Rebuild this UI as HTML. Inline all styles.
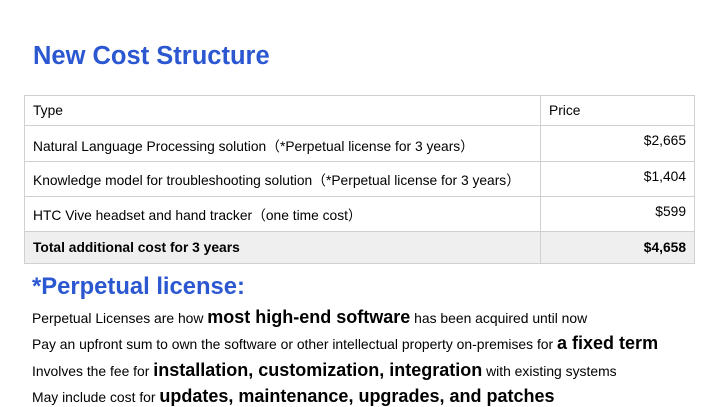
<!DOCTYPE html>
<html><head><meta charset="utf-8"><style>
body{margin:0;width:720px;height:405px;background:#fff;font-family:"Liberation Sans","Noto Sans CJK SC",sans-serif;position:relative;overflow:hidden;color:#000}
h1{position:absolute;left:33px;top:41px;margin:0;font-size:25.5px;color:#2b57d1;font-weight:bold;line-height:30px}
table{position:absolute;left:24px;top:95px;border-collapse:collapse;width:671px;font-size:13.8px}
td{border:1px solid #d0d0d0;padding:0 8px;vertical-align:middle}
td.p{text-align:right;vertical-align:top;padding-top:7px}
.tot td{background:#efefef;font-weight:bold}
.tot td.p{vertical-align:middle;padding-top:0}
h2{position:absolute;left:32px;top:273px;margin:0;font-size:23.8px;color:#2b57d1;font-weight:bold;line-height:28px}
.l{position:absolute;left:32px;font-size:13.9px;white-space:nowrap;line-height:20px}
.l b{font-size:18px}
</style></head><body>
<h1>New Cost Structure</h1>
<table>
<tr style="height:30px"><td style="width:499px">Type</td><td style="padding-left:8px">Price</td></tr>
<tr style="height:36px"><td style="padding-top:2px">Natural Language Processing solution（*Perpetual license for 3 years）</td><td class="p">$2,665</td></tr>
<tr style="height:35px"><td style="padding-top:0">Knowledge model for troubleshooting solution（*Perpetual license for 3 years）</td><td class="p">$1,404</td></tr>
<tr style="height:35px"><td>HTC Vive headset and hand tracker（one time cost）</td><td class="p">$599</td></tr>
<tr class="tot" style="height:32px"><td>Total additional cost for 3 years</td><td class="p">$4,658</td></tr>
</table>
<h2>*Perpetual license:</h2>
<div class="l" style="top:307px">Perpetual Licenses are how <b>most high-end software</b> has been acquired until now</div>
<div class="l" style="top:333px">Pay an upfront sum to own the software or other intellectual property on-premises for <b>a fixed term</b></div>
<div class="l" style="top:360px">Involves the fee for <b>installation, customization, integration</b> with existing systems</div>
<div class="l" style="top:386px">May include cost for <b>updates, maintenance, upgrades, and patches</b></div>
</body></html>
